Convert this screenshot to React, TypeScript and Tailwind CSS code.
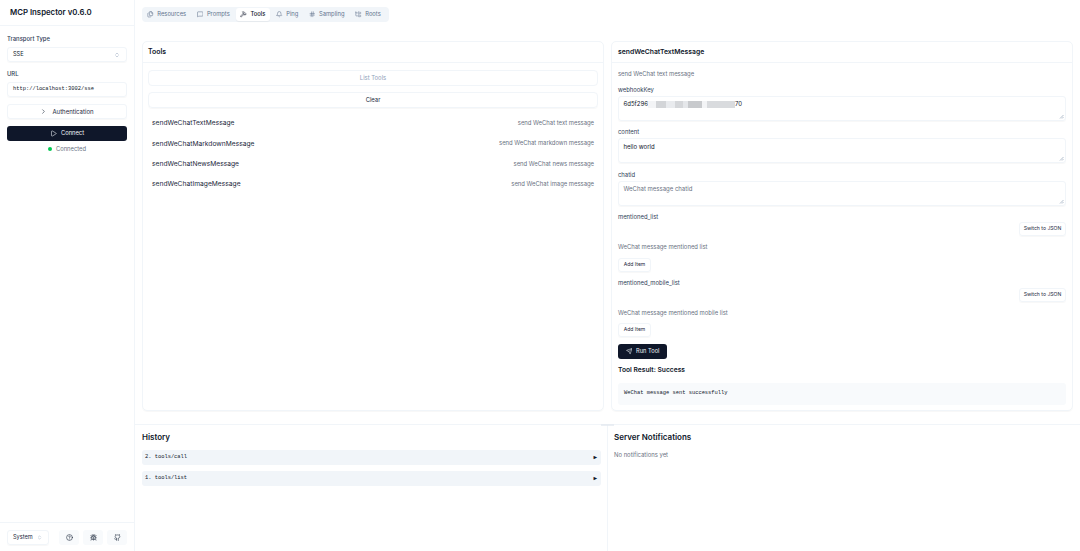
import { Bell, Bug, ChevronRight, ChevronsUpDown, CircleHelp, Files, FolderTree, Github, Hammer, Hash, MessageSquare, Play, Send } from 'lucide-react'

const tabs = [
  { name: 'Resources', icon: Files },
  { name: 'Prompts', icon: MessageSquare },
  { name: 'Tools', icon: Hammer, active: true },
  { name: 'Ping', icon: Bell },
  { name: 'Sampling', icon: Hash },
  { name: 'Roots', icon: FolderTree },
]

const tools = [
  { name: 'sendWeChatTextMessage', desc: 'send WeChat text message' },
  { name: 'sendWeChatMarkdownMessage', desc: 'send WeChat markdown message' },
  { name: 'sendWeChatNewsMessage', desc: 'send WeChat news message' },
  { name: 'sendWeChatImageMessage', desc: 'send WeChat image message' },
]

// blurred part of the webhook key
const redacted = [
  { w: 'w-[8px]', bg: 'bg-[#f3f4f6]' },
  { w: 'w-[10px]', bg: 'bg-[#d3d5d8]' },
  { w: 'w-[9px]', bg: 'bg-[#e9ebee]' },
  { w: 'w-[8px]', bg: 'bg-[#d5d7da]' },
  { w: 'w-[5px]', bg: 'bg-[#e5e7ea]' },
  { w: 'w-[14px]', bg: 'bg-[#c8cacd]' },
  { w: 'w-[5px]', bg: 'bg-[#f3f4f6]' },
  { w: 'w-[28px]', bg: 'bg-[#d9dbde]' },
]

function Field({ label, value, placeholder, children }: { label: string; value?: string; placeholder?: string; children?: React.ReactNode }) {
  return (
    <div className="mb-[5.5px]">
      <div className="h-[11px] text-[5.9px] leading-[11px] text-slate-700">{label}</div>
      <div className="relative mt-[1px] h-[25px] rounded-[3px] border border-slate-100 px-[4.5px] py-[1.5px] text-[6px] leading-[12px] shadow-[0_1px_1px_rgba(0,0,0,0.03)]">
        {children ?? (value ? <span className="text-slate-900">{value}</span> : <span className="text-gray-500">{placeholder}</span>)}
        <svg className="absolute bottom-[1px] right-[1px] h-[5px] w-[5px]" viewBox="0 0 5 5">
          <path d="M1 4.5 4.5 1M3 4.5 4.5 3" stroke="#94a3b8" strokeWidth="0.7" fill="none" />
        </svg>
      </div>
    </div>
  )
}

function ArrayField({ label, hint }: { label: string; hint: string }) {
  return (
    <div>
      <div className="h-[11px] text-[5.9px] leading-[11px] text-slate-700">{label}</div>
      <div className="flex justify-end">
        <div className="flex h-[14px] w-[47px] items-center justify-center whitespace-nowrap rounded-[3px] border border-slate-100 text-[5.1px] text-slate-800 shadow-[0_1px_1px_rgba(0,0,0,0.03)]">Switch to JSON</div>
      </div>
      <div className="mt-[5px] h-[11px] text-[5.9px] leading-[11px] text-gray-500">{hint}</div>
      <div className="mt-[5.5px] flex h-[14px] w-[33px] items-center justify-center whitespace-nowrap rounded-[3px] border border-slate-100 text-[5.1px] text-slate-800 shadow-[0_1px_1px_rgba(0,0,0,0.03)]">Add Item</div>
    </div>
  )
}

export default function App() {
  return (
    <div className="flex h-screen w-full overflow-hidden bg-white font-['Inter',sans-serif] text-slate-900">
      <aside className="flex w-[135px] shrink-0 flex-col border-r border-slate-100">
        <div className="flex h-[26px] items-center border-b border-slate-100 pl-[10px] text-[7.8px] font-semibold">MCP Inspector v0.6.0</div>
        <div className="flex-1 px-[7px] pt-[6px] text-[5.9px]">
          <div className="h-[14px] font-medium leading-[14px] text-slate-700">Transport Type</div>
          <div className="mt-[1px] flex h-[15px] items-center justify-between rounded-[3px] border border-slate-100 pl-[5px] pr-[6px] text-[5.6px] shadow-[0_1px_1px_rgba(0,0,0,0.03)]">
            SSE
            <ChevronsUpDown className="h-[6px] w-[6px] text-slate-400" />
          </div>
          <div className="mt-[5px] h-[14px] font-medium leading-[14px] text-slate-700">URL</div>
          <div className="mt-[1px] flex h-[15px] items-center rounded-[3px] border border-slate-100 pl-[5px] font-['Liberation_Mono',monospace] text-[5.4px] text-slate-900 shadow-[0_1px_1px_rgba(0,0,0,0.03)]">http://localhost:3002/sse</div>
          <div className="mt-[7px] flex h-[15px] items-center justify-center gap-[5px] rounded-[3px] border border-slate-100 text-[6px] text-slate-800 shadow-[0_1px_1px_rgba(0,0,0,0.03)]">
            <ChevronRight className="h-[7px] w-[7px]" />
            Authentication
          </div>
          <div className="mt-[7px] flex h-[15px] items-center justify-center gap-[4px] rounded-[3px] bg-[#0f172a] text-[5.8px] text-slate-100">
            <Play className="h-[7px] w-[7px]" />
            Connect
          </div>
          <div className="mt-[1px] flex h-[14px] items-center justify-center gap-[4px] text-[5.8px] text-gray-500">
            <span className="h-[4px] w-[4px] rounded-full bg-green-500" />
            Connected
          </div>
        </div>
        <div className="flex h-[29px] items-center justify-between border-t border-slate-100 px-[7px]">
          <div className="flex h-[15px] w-[42px] items-center justify-between rounded-[3px] border border-slate-100 pl-[5px] pr-[6px] text-[5.6px] text-slate-800 shadow-[0_1px_1px_rgba(0,0,0,0.03)]">
            System
            <ChevronsUpDown className="h-[5px] w-[5px] text-slate-400" />
          </div>
          <div className="flex gap-[4px]">
            {[CircleHelp, Bug, Github].map((Icon, i) => (
              <div key={i} className="flex h-[15px] w-[20px] items-center justify-center rounded-[3px] bg-slate-50">
                <Icon className="h-[7px] w-[7px] text-slate-800" />
              </div>
            ))}
          </div>
        </div>
      </aside>

      <main className="flex min-w-0 flex-1 flex-col">
        <div className="h-[424px] px-[7px] pt-[7px]">
          <div className="flex h-[15px] w-[247px] items-center gap-[1.2px] rounded-[4px] bg-slate-100 px-[0.5px] text-[5.8px] text-slate-500">
            {tabs.map(t => (
              <div key={t.name} className={t.active ? 'flex h-[13px] items-center gap-[3.5px] rounded-[3px] bg-white px-[4.8px] font-medium text-slate-900 shadow-[0_1px_1px_rgba(0,0,0,0.05)]' : 'flex h-[13px] items-center gap-[3.5px] px-[4.8px]'}>
                <t.icon className="h-[6.5px] w-[6.5px]" />
                {t.name}
              </div>
            ))}
          </div>

          <div className="mt-[19px] flex gap-[7px]">
            <section className="h-[370px] w-[462px] rounded-[5px] border border-slate-100 shadow-[0_1px_1px_rgba(0,0,0,0.03)]">
              <div className="flex h-[21px] items-center border-b border-slate-100 pl-[5px] text-[6.9px] font-semibold">Tools</div>
              <div className="px-[5px] pt-[7px]">
                <div className="flex h-[16px] items-center justify-center rounded-[4px] border border-slate-100 text-[5.9px] text-slate-400">List Tools</div>
                <div className="mt-[6px] flex h-[16px] items-center justify-center rounded-[4px] border border-slate-100 text-[5.9px] text-slate-800 shadow-[0_1px_1px_rgba(0,0,0,0.03)]">Clear</div>
                <div className="mt-[5px]">
                  {tools.map(t => (
                    <div key={t.name} className="flex h-[20.4px] items-center justify-between px-[4px]">
                      <span className="text-[6.7px] text-slate-800">{t.name}</span>
                      <span className="text-[5.9px] text-gray-500">{t.desc}</span>
                    </div>
                  ))}
                </div>
              </div>
            </section>

            <section className="h-[370px] w-[462px] rounded-[5px] border border-slate-100 shadow-[0_1px_1px_rgba(0,0,0,0.03)]">
              <div className="flex h-[21px] items-center border-b border-slate-100 pl-[6px] text-[6.8px] font-semibold">sendWeChatTextMessage</div>
              <div className="px-[6px] pt-[5px]">
                <div className="h-[12px] text-[5.9px] leading-[12px] text-gray-500">send WeChat text message</div>
                <div className="mt-[3.5px]">
                  <Field label="webhookKey">
                    <span className="flex items-center text-slate-900">
                      6d5f296
                      <span className="flex">
                        {redacted.map((r, i) => (
                          <span key={i} className={`h-[7px] ${r.w} ${r.bg}`} />
                        ))}
                      </span>
                      70
                    </span>
                  </Field>
                  <Field label="content" value="hello world" />
                  <Field label="chatid" placeholder="WeChat message chatid" />
                </div>
                <ArrayField label="mentioned_list" hint="WeChat message mentioned list" />
                <div className="mt-[5px]">
                  <ArrayField label="mentioned_mobile_list" hint="WeChat message mentioned mobile list" />
                </div>
                <div className="mt-[7px] flex h-[15px] w-[49px] items-center justify-center gap-[4px] rounded-[3px] bg-[#0f172a] text-[5.7px] text-slate-100">
                  <Send className="h-[6.5px] w-[6.5px]" />
                  Run Tool
                </div>
                <div className="mt-[6px] h-[11px] text-[6.7px] font-semibold leading-[11px]">Tool Result: Success</div>
                <div className="mt-[6.5px] flex h-[22px] items-center rounded-[3px] bg-slate-50 px-[6px] font-['Liberation_Mono',monospace] text-[5.4px] text-slate-900">WeChat message sent successfully</div>
              </div>
            </section>
          </div>
        </div>

        <div className="relative flex min-h-0 flex-1 border-t border-slate-100">
          <div className="absolute -top-px left-[466px] h-[2px] w-[13px] bg-slate-200/70" />
          <div className="w-[473px] border-r border-slate-100 pl-[7px] pr-[6px] pt-[5px]">
            <div className="h-[14px] text-[8px] font-semibold leading-[14px]">History</div>
            {['2. tools/call', '1. tools/list'].map(h => (
              <div key={h} className="mt-[6px] flex h-[15px] items-center justify-between rounded-[3px] bg-slate-100 pl-[3px] pr-[4px] font-['Liberation_Mono',monospace] text-[5.4px] text-slate-900">
                {h}
                <span className="text-[6px] text-slate-900">▶</span>
              </div>
            ))}
          </div>
          <div className="flex-1 pl-[6px] pt-[5px]">
            <div className="h-[14px] text-[8px] font-semibold leading-[14px]">Server Notifications</div>
            <div className="mt-[5px] h-[12px] text-[5.9px] leading-[12px] text-gray-500">No notifications yet</div>
          </div>
        </div>
      </main>
    </div>
  )
}
